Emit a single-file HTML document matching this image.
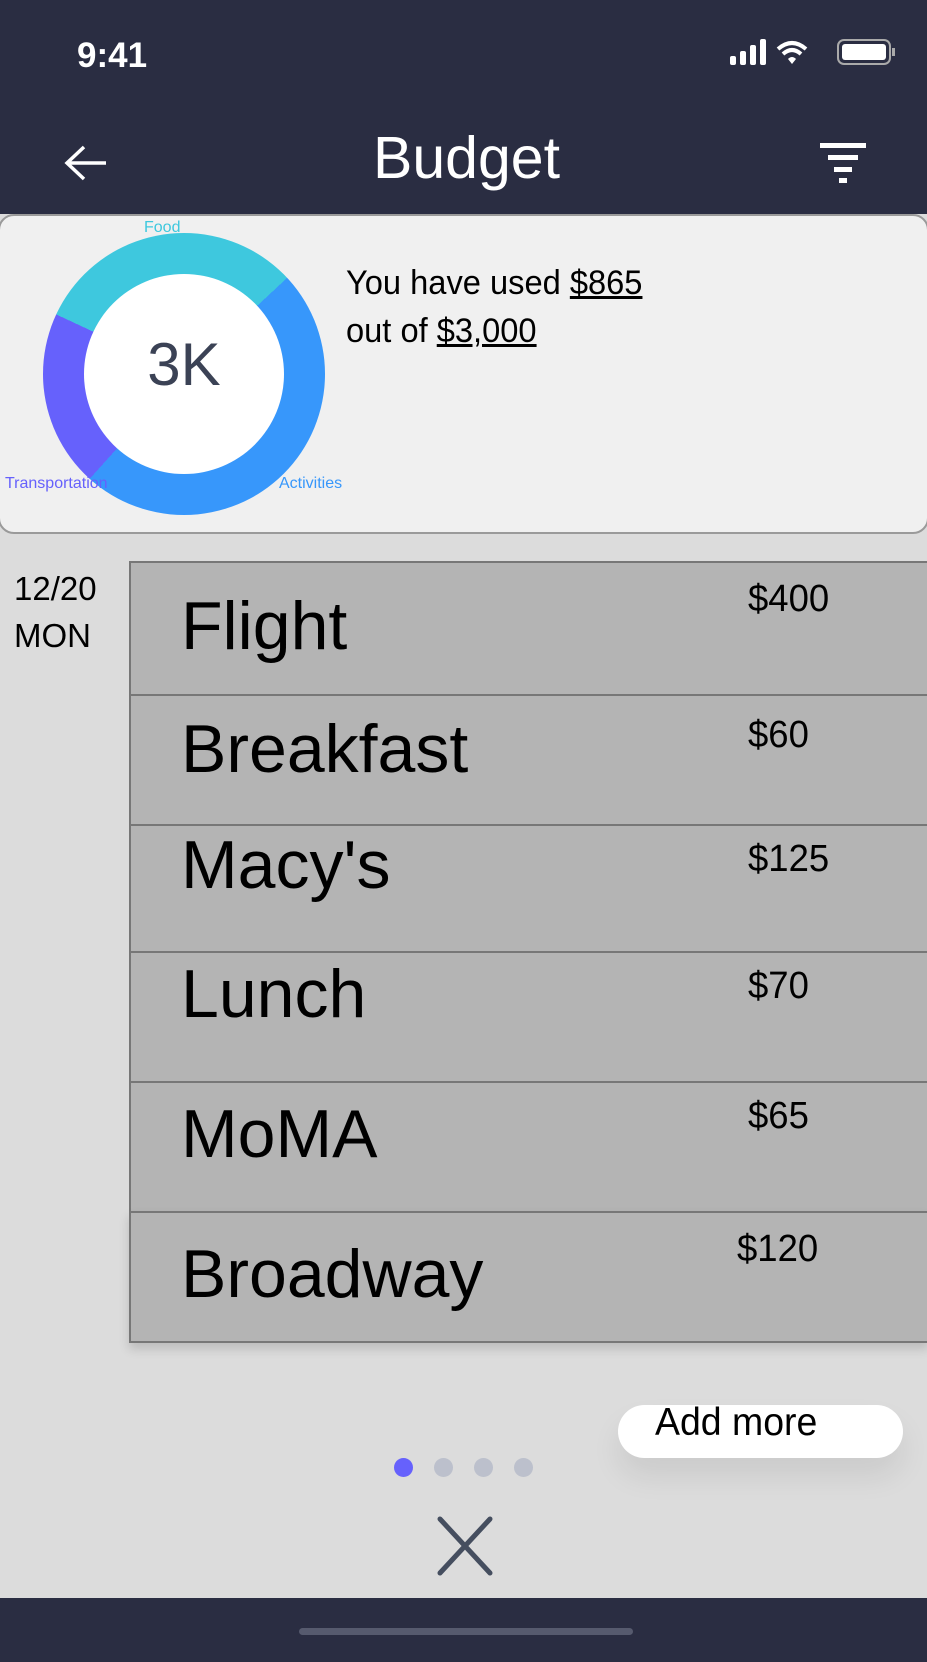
<!DOCTYPE html>
<html><head><meta charset="utf-8"><style>
*{margin:0;padding:0;box-sizing:border-box}
body{width:927px;height:1662px;background:#dcdcdc;font-family:"Liberation Sans",sans-serif;position:relative;overflow:hidden}
.hdr{position:absolute;left:0;top:0;width:927px;height:214px;background:#2a2d42;color:#fff}
.abs{position:absolute}
.card{position:absolute;left:-2px;top:214px;width:931px;height:320px;background:#f0f0f0;border:2px solid #9a9a9a;border-radius:16px}
.row{position:absolute;left:129px;width:800px;background:#b4b4b4;border:2px solid #777}
.nm{position:absolute;left:50px;font-size:68px;color:#000}
.pr{position:absolute;left:617px;font-size:38px;color:#000;transform:scaleX(.96);transform-origin:left}
.dot{position:absolute;top:1458px;width:19px;height:19px;border-radius:50%;background:#bcc0cc}
</style></head><body>
<div class="hdr">
 <div class="abs" style="left:77px;top:36px;font-size:35px;font-weight:bold">9:41</div>
 <svg class="abs" style="left:728px;top:38px" width="170" height="30" viewBox="0 0 170 30">
  <rect x="2" y="18" width="6" height="9" rx="2" fill="#fff"/><rect x="12" y="13" width="6" height="14" rx="2" fill="#fff"/><rect x="22" y="7" width="6" height="20" rx="2" fill="#fff"/><rect x="32" y="1" width="6" height="26" rx="2" fill="#fff"/>
  <path d="M50 11 Q64 -1 78 11" stroke="#fff" stroke-width="4" fill="none"/><path d="M55 16 Q64 8 73 16" stroke="#fff" stroke-width="4" fill="none"/><path d="M60 21 L64 26 L68 21 Q64 17 60 21Z" fill="#fff"/>
  <rect x="110" y="2" width="52" height="24" rx="6" stroke="#aaa" stroke-width="2" fill="none"/><rect x="114" y="6" width="44" height="16" rx="3" fill="#fff"/><rect x="164" y="10" width="3" height="8" fill="#aaa"/>
 </svg>
 <svg class="abs" style="left:64px;top:145px" width="44" height="36" viewBox="0 0 44 36"><path d="M42 18H4M20 2L3 18L20 34" stroke="#fff" stroke-width="3.5" fill="none"/></svg>
 <div class="abs" style="left:0;width:933px;text-align:center;top:124px;font-size:59px">Budget</div>
 <svg class="abs" style="left:820px;top:143px" width="46" height="40" viewBox="0 0 46 40"><rect x="0" y="0" width="46" height="5" fill="#fff"/><rect x="8" y="12" width="30" height="5" fill="#fff"/><rect x="14" y="24" width="18" height="5" fill="#fff"/><rect x="19" y="35" width="8" height="5" fill="#fff"/></svg>
</div>
<div class="card"></div>
<div class="abs" style="left:43px;top:233px;width:282px;height:282px;border-radius:50%;background:conic-gradient(#3ec8de 0deg 47deg,#3797fb 47deg 222deg,#6661fc 222deg 295deg,#3ec8de 295deg 360deg)"></div>
<div class="abs" style="left:84px;top:274px;width:200px;height:200px;border-radius:50%;background:#fff"></div>
<div class="abs" style="left:84px;top:330px;width:200px;text-align:center;font-size:60px;color:#3b4255">3K</div>
<div class="abs" style="left:144px;top:219px;font-size:16px;color:#3ec8de">Food</div>
<div class="abs" style="left:5px;top:475px;font-size:16px;color:#6661fc">Transportation</div>
<div class="abs" style="left:279px;top:475px;font-size:16px;color:#3797fb">Activities</div>
<div class="abs" style="left:346px;top:259px;font-size:34px;line-height:48px;color:#000;transform:scaleX(.96);transform-origin:left">You have used <u>$865</u><br>out of <u>$3,000</u></div>
<div class="abs" style="left:14px;top:565px;font-size:33px;line-height:47px;color:#000">12/20<br>MON</div>
<div class="row" style="top:561px;height:135px"><div class="nm" style="top:24px">Flight</div><div class="pr" style="top:15px">$400</div></div>
<div class="row" style="top:694px;height:132px"><div class="nm" style="top:14px">Breakfast</div><div class="pr" style="top:18px">$60</div></div>
<div class="row" style="top:824px;height:129px"><div class="nm" style="top:0px">Macy's</div><div class="pr" style="top:12px">$125</div></div>
<div class="row" style="top:951px;height:132px"><div class="nm" style="top:2px">Lunch</div><div class="pr" style="top:12px">$70</div></div>
<div class="row" style="top:1081px;height:132px"><div class="nm" style="top:12px">MoMA</div><div class="pr" style="top:12px">$65</div></div>
<div class="row" style="top:1211px;height:132px;box-shadow:0 6px 10px rgba(0,0,0,.15)"><div class="nm" style="top:22px">Broadway</div><div class="pr" style="top:15px;left:606px">$120</div></div>
<div class="abs" style="left:618px;top:1405px;width:285px;height:53px;border-radius:27px;background:#fff;box-shadow:0 18px 30px rgba(0,0,0,.08)"></div>
<div class="abs" style="left:655px;top:1401px;font-size:39px;color:#000;transform:scaleX(.96);transform-origin:left">Add more</div>
<div class="dot" style="left:394px;background:#6661fc"></div><div class="dot" style="left:434px"></div><div class="dot" style="left:474px"></div><div class="dot" style="left:514px"></div>
<svg class="abs" style="left:434px;top:1515px" width="60" height="62" viewBox="0 0 60 62"><path d="M6 4L56 58M56 4L6 58" stroke="#454e5f" stroke-width="5" stroke-linecap="round"/></svg>
<div class="abs" style="left:0;top:1598px;width:927px;height:64px;background:#2a2d42"></div>
<div class="abs" style="left:299px;top:1628px;width:334px;height:7px;border-radius:4px;background:#565a6e"></div>
</body></html>
